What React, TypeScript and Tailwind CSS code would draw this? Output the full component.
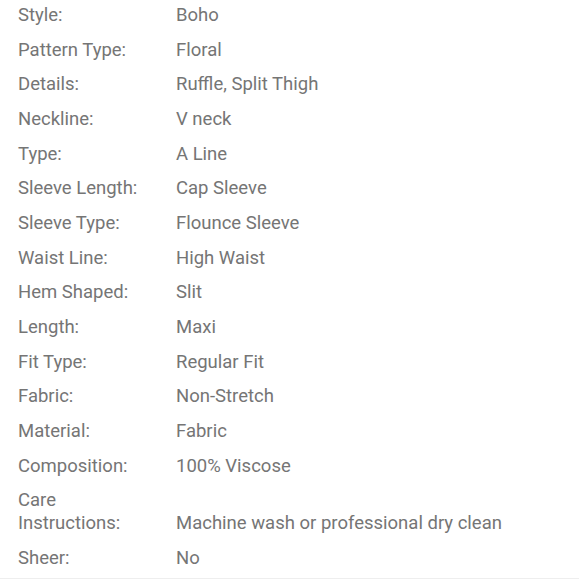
import React from 'react';

const rows: [string, string][] = [
  ['Style:', 'Boho'],
  ['Pattern Type:', 'Floral'],
  ['Details:', 'Ruffle, Split Thigh'],
  ['Neckline:', 'V neck'],
  ['Type:', 'A Line'],
  ['Sleeve Length:', 'Cap Sleeve'],
  ['Sleeve Type:', 'Flounce Sleeve'],
  ['Waist Line:', 'High Waist'],
  ['Hem Shaped:', 'Slit'],
  ['Length:', 'Maxi'],
  ['Fit Type:', 'Regular Fit'],
  ['Fabric:', 'Non-Stretch'],
  ['Material:', 'Fabric'],
  ['Composition:', '100% Viscose'],
  ['Care Instructions:', 'Machine wash or professional dry clean'],
  ['Sheer:', 'No'],
];

export default function App() {
  return (
    <div className="w-[579px] h-[580px] overflow-hidden bg-white font-['Roboto',sans-serif] text-[18.5px] leading-[23px] text-[#757575]">
      <div className="mt-[-2px] pb-[2px] border-b border-[#eeeeee]">
        {rows.map(([label, value]) => (
          <div key={label} className="flex items-end pl-[18px] py-[5.85px]">
            <div className="w-[158px] shrink-0 pr-[24px]">{label}</div>
            <div className="flex-1">{value}</div>
          </div>
        ))}
      </div>
    </div>
  );
}
